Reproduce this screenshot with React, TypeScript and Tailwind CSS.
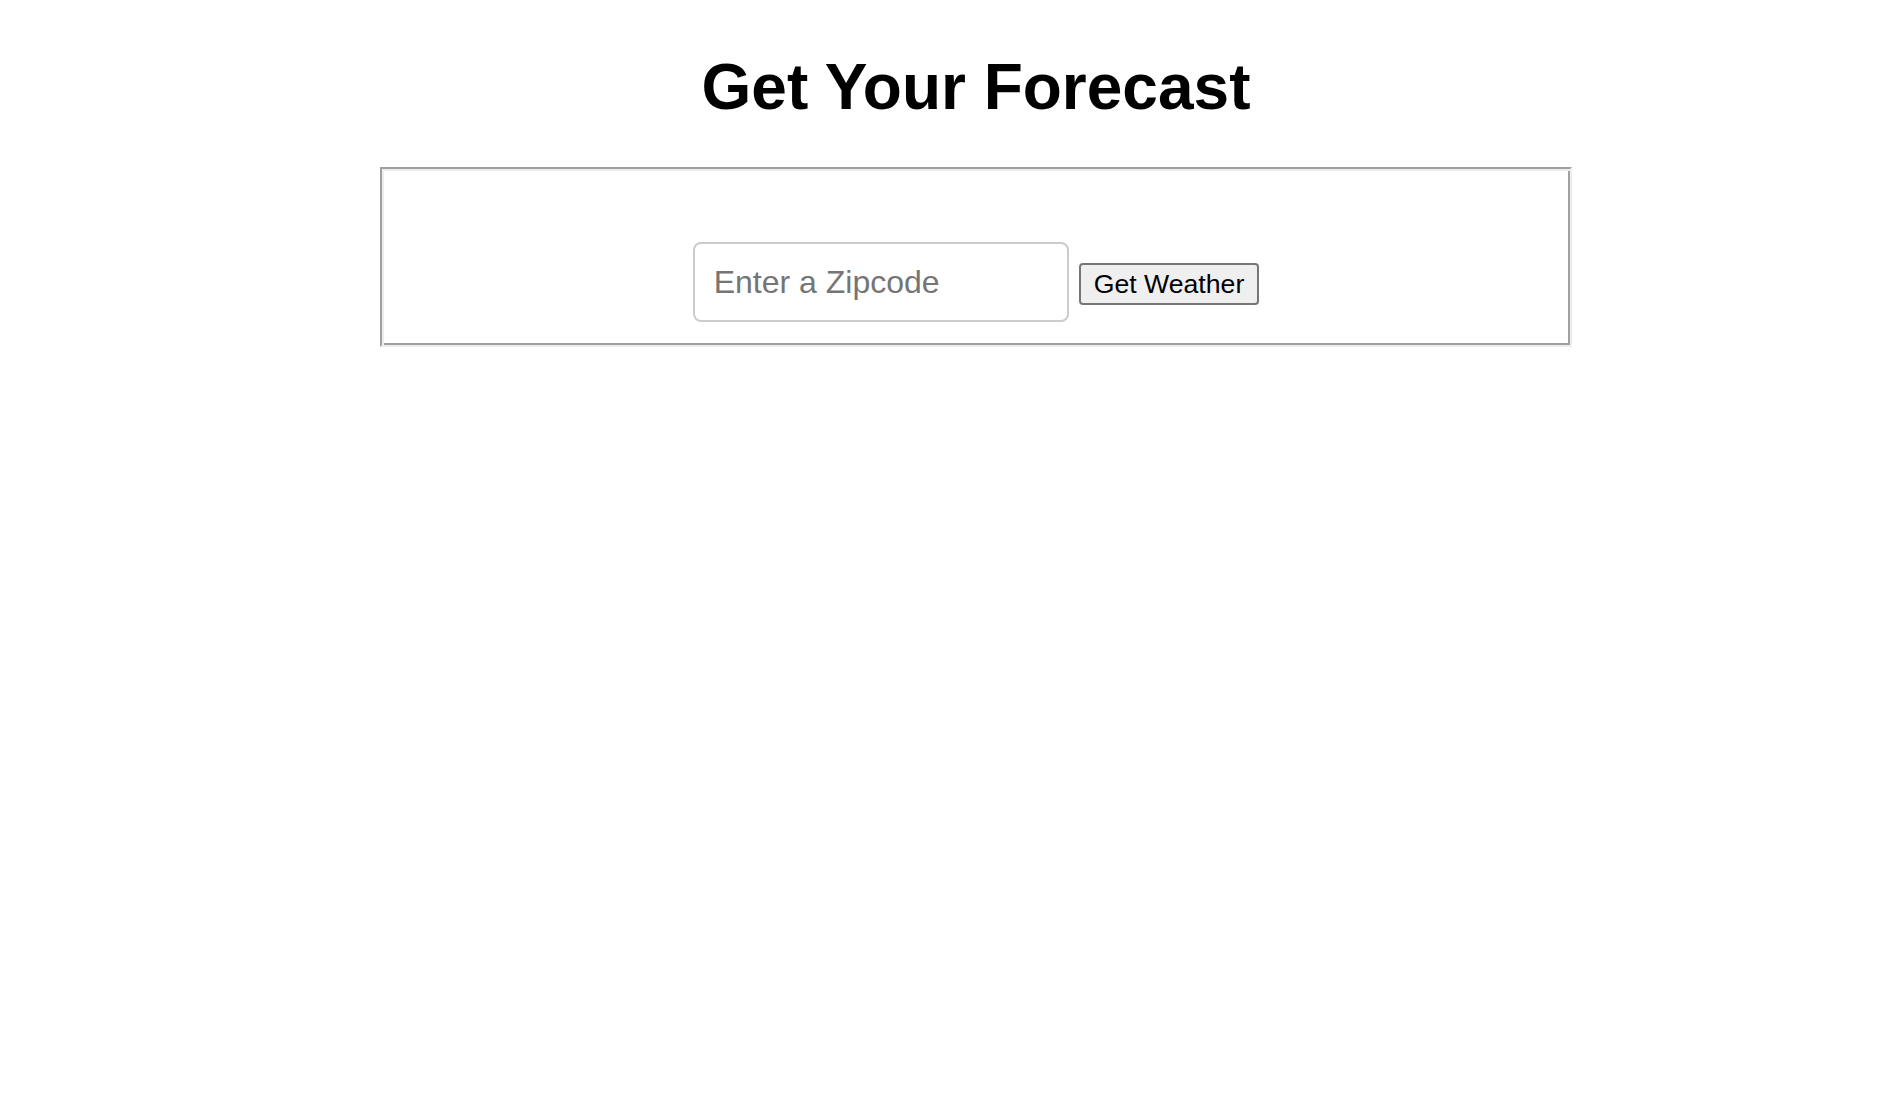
export default function App() {
    return (
        <div className="min-h-screen bg-white font-['Liberation_Sans',Arial,sans-serif] text-black">
            <div className="ml-[380px] w-[1192px]">
                <h1 className="mt-[50px] mb-[43px] text-center text-[64px] font-bold leading-[74px]">
                    Get Your Forecast
                </h1>

                {/* groove border: outer dark/light edge + inset shadow for inner edge */}
                <fieldset className="border-2 border-t-[#a0a0a0] border-l-[#a0a0a0] border-r-[#ededed] border-b-[#ededed] shadow-[inset_2px_2px_0_#ededed,inset_-2px_-2px_0_#a0a0a0] pt-[73px] pb-[23px]">
                    <div className="flex items-center justify-center gap-[10px]">
                        <input
                            type="text"
                            placeholder="Enter a Zipcode"
                            className="w-[376px] h-[80px] rounded-[8px] border-2 border-[#cccccc] pl-[19px] pr-[20px] text-[32px] placeholder:text-[#757575] outline-none"
                        />
                        <button className="mt-[4px] h-[42px] rounded-[4px] border-2 border-[#767676] bg-[#efefef] px-[13px] text-[26.67px] leading-none">
                            Get Weather
                        </button>
                    </div>
                </fieldset>
            </div>
        </div>
    );
}
